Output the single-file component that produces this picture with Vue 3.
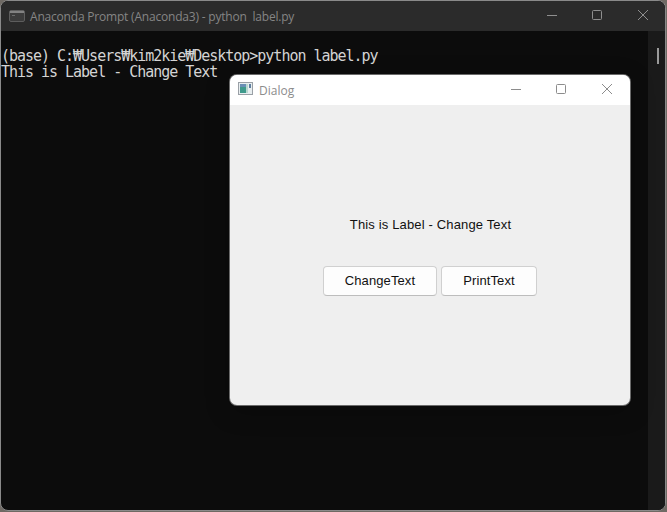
<script setup>
const consoleLines = ['(base) C:₩Users₩kim2kie₩Desktop>python label.py', 'This is Label - Change Text']
</script>

<template>
  <div class="desktop">
    <div class="terminal">
      <header class="term-bar">
        <svg class="term-icon" width="16" height="12" viewBox="0 0 16 12">
          <rect x="0.5" y="0.5" width="15" height="11" rx="1.5" fill="#3c3c3c" stroke="#5e5e5e" />
          <rect x="1" y="1" width="14" height="2" fill="#828282" />
          <path d="M3 5.5h3" fill="none" stroke="#777" stroke-width="0.8" />
        </svg>
        <span class="term-title">Anaconda Prompt (Anaconda3) - python&nbsp; label.py</span>
        <div class="controls term-controls">
          <svg width="46" height="30" viewBox="0 0 46 30"><path d="M19 14.5h10" stroke="#8f8f8f" /></svg>
          <svg width="46" height="30" viewBox="0 0 46 30"><rect x="18.5" y="9.5" width="9" height="9" rx="1" fill="none" stroke="#8f8f8f" /></svg>
          <svg width="46" height="30" viewBox="0 0 46 30"><path d="M18 9l10 10M28 9L18 19" stroke="#8f8f8f" /></svg>
        </div>
      </header>
      <div class="term-main">
        <div class="console">
          <div v-for="line in consoleLines" :key="line" class="console-line">{{ line }}</div>
        </div>
        <div class="scrollbar"><div class="thumb"></div></div>
      </div>
    </div>

    <section class="dialog">
      <header class="dlg-bar">
        <svg class="dlg-icon" width="15" height="13" viewBox="0 0 15 13">
          <rect x="0.5" y="0.5" width="14" height="12" fill="#e8eef0" stroke="#9aa0a6" />
          <rect x="2" y="2" width="6" height="9" fill="#3f9a8c" />
          <rect x="2" y="2" width="6" height="3" fill="#6a8fb5" />
          <rect x="8" y="2" width="2" height="9" fill="#b8d8d0" />
          <rect x="11" y="2" width="2" height="4" fill="#5f7f9f" />
        </svg>
        <span class="dlg-title">Dialog</span>
        <div class="controls dlg-controls">
          <svg width="46" height="30" viewBox="0 0 46 30"><path d="M19 14.5h10" stroke="#8c8c8c" /></svg>
          <svg width="46" height="30" viewBox="0 0 46 30"><rect x="18.5" y="9.5" width="9" height="9" rx="1" fill="none" stroke="#8c8c8c" /></svg>
          <svg width="46" height="30" viewBox="0 0 46 30"><path d="M18 9l10 10M28 9L18 19" stroke="#8c8c8c" /></svg>
        </div>
      </header>
      <div class="dlg-body">
        <p class="dlg-label">This is Label - Change Text</p>
        <div class="dlg-buttons">
          <button class="btn btn-change">ChangeText</button>
          <button class="btn btn-print">PrintText</button>
        </div>
      </div>
    </section>
  </div>
</template>

<style>
html, body { margin: 0; background: #3a3a3a; }
</style>

<style scoped>
.desktop {
  position: relative;
  width: 667px;
  height: 512px;
  overflow: hidden;
  background: #6f6a64;
}
.terminal {
  width: 666px;
  height: 511px;
  display: flex;
  flex-direction: column;
  box-sizing: border-box;
  border: 1px solid #8a8a8a;
  border-radius: 8px;
  overflow: hidden;
  background: #0c0c0c;
}
.term-bar {
  height: 30px;
  flex: none;
  display: flex;
  align-items: center;
  background: #2b2b2b;
  padding-left: 8px;
}
.term-icon { flex: none; margin-right: 5px; }
.term-title {
  font: 12px "Open Sans", "Noto Sans", sans-serif;
  letter-spacing: -0.2px;
  color: #858585;
  white-space: nowrap;
}
.controls { display: flex; margin-left: auto; }
.term-controls { margin-right: -1px; }
.term-main { flex: 1; display: flex; min-height: 0; }
.console {
  flex: 1;
  padding-top: 17px;
  font: 15px/16px "DejaVu Sans Mono", monospace;
  letter-spacing: -1.02px;
  color: #d4d4d4;
  white-space: pre;
}
.console-line { height: 16px; }
.scrollbar {
  width: 17px;
  flex: none;
  background: #1a1a1a;
  padding: 17px 0 0 9px;
  box-sizing: border-box;
}
.thumb { width: 2px; height: 16px; background: #9a9a9a; }

.dialog {
  position: absolute;
  left: 230px;
  top: 75px;
  width: 400px;
  height: 330px;
  display: flex;
  flex-direction: column;
  border-radius: 7px;
  overflow: hidden;
  background: #efefef;
  box-shadow: 0 0 0 1px #6a6a6a, 0 6px 24px rgba(0, 0, 0, 0.25);
}
.dlg-bar {
  height: 30px;
  flex: none;
  display: flex;
  align-items: center;
  background: #fff;
  padding-left: 8px;
}
.dlg-icon { flex: none; margin-right: 6px; margin-top: -3px; }
.dlg-title {
  font: 12px "Open Sans", "Noto Sans", sans-serif;
  color: #8c8c8c;
}
.dlg-body {
  flex: 1;
  display: flex;
  flex-direction: column;
  align-items: center;
}
.dlg-label {
  margin: 112px 0 0 1px;
  height: 16px;
  font: 13px/16px "Liberation Sans", sans-serif;
  letter-spacing: 0.15px;
  color: #111;
}
.dlg-buttons {
  display: flex;
  gap: 4px;
  margin: 33px 0 0 0;
}
.btn {
  height: 30px;
  box-sizing: border-box;
  border: 1px solid #d0d0d0;
  border-bottom-color: #bdbdbd;
  border-radius: 4px;
  background: #fdfdfd;
  font: 13px "Liberation Sans", sans-serif;
  letter-spacing: 0.1px;
  color: #111;
  padding: 0 0 2px;
}
.btn-change { width: 114px; }
.btn-print { width: 96px; }
</style>
